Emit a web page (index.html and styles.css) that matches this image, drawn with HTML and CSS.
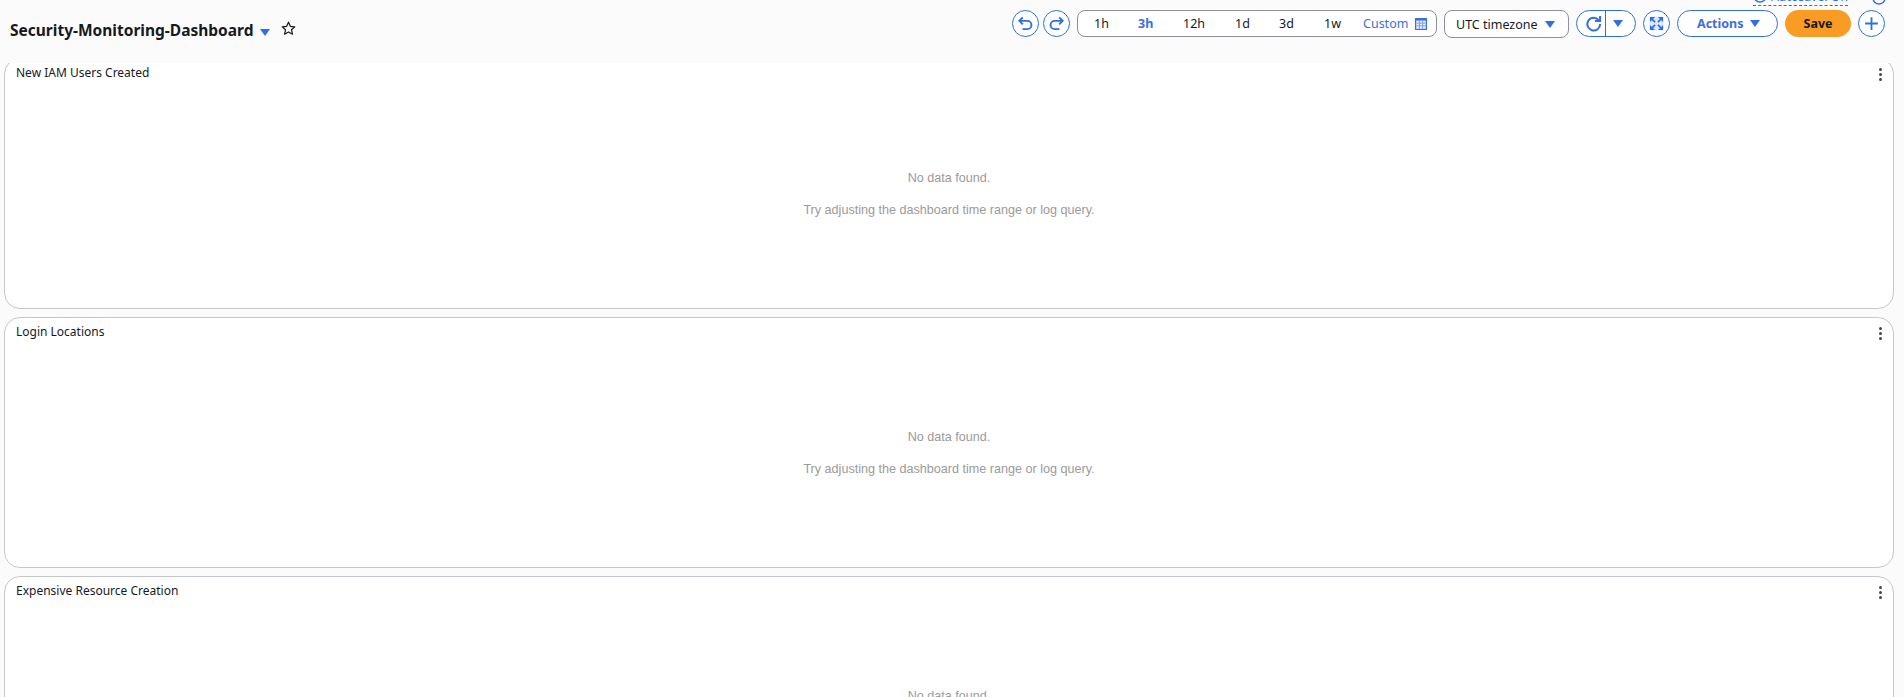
FILE: index.html
```html
<!DOCTYPE html>
<html lang="en">
<head>
  <meta charset="UTF-8" />
  <title>Security-Monitoring-Dashboard</title>
  <link rel="stylesheet" href="styles.css">
</head>
<body>

  <header class="topbar">
    <div class="title-group">
      <h1 class="dash-title">Security-Monitoring-Dashboard</h1>
      <span class="caret caret-title"></span>
      <svg class="star" width="15" height="15" viewBox="0 0 16 16"><path d="M8 1.3l2 4.4 4.7.5-3.5 3.2 1 4.7L8 11.7l-4.2 2.4 1-4.7L1.3 6.2 6 5.7z" fill="none" stroke="#16191f" stroke-width="1.3" stroke-linejoin="round"/></svg>
    </div>

    <div class="autosave-strip">
      <a class="autosave"><svg width="14" height="14" viewBox="0 0 14 14"><circle cx="7" cy="7" r="6" fill="none" stroke="#2f6fe0" stroke-width="1.5"/></svg><span>Autosave: On</span></a>
      <svg class="info" width="14" height="14" viewBox="0 0 14 14"><circle cx="7" cy="7" r="6" fill="none" stroke="#2f6fe0" stroke-width="1.5"/></svg>
    </div>

    <div class="tools">
      <div class="pair">
        <button class="round">
          <svg width="17" height="17" viewBox="0 0 16 16"><path d="M5.5 2.2L2.2 5.5l3.3 3.3M2.5 5.5h7.2a3.9 3.9 0 0 1 0 7.8H5.2" fill="none" stroke="#2f6fe0" stroke-width="1.8"/></svg>
        </button>
        <button class="round">
          <svg width="17" height="17" viewBox="0 0 16 16"><path d="M10.5 2.2l3.3 3.3-3.3 3.3M13.5 5.5H6.3a3.9 3.9 0 0 0 0 7.8h4.5" fill="none" stroke="#2f6fe0" stroke-width="1.8"/></svg>
        </button>
      </div>

      <div class="ranges">
        <span class="range r-1h">1h</span>
        <span class="range r-3h active">3h</span>
        <span class="range r-12h">12h</span>
        <span class="range r-1d">1d</span>
        <span class="range r-3d">3d</span>
        <span class="range r-1w">1w</span>
        <span class="custom">Custom
          <svg width="12" height="12" viewBox="0 0 12 12"><rect width="12" height="12" fill="#3b6fe0"/><path d="M1.2 2.6h9.6v8.2H1.2z" fill="#eaf0fd"/><path d="M1.2 5.2h9.6M1.2 7.8h9.6M4.4 2.6v8.2M7.6 2.6v8.2" stroke="#7fa0ea" stroke-width="1"/></svg>
        </span>
      </div>

      <div class="tz">UTC timezone <span class="caret"></span></div>

      <div class="refresh">
        <span class="refresh-icon">
          <svg width="17" height="17" viewBox="0 0 16 16"><path d="M13 5A6 6 0 1 0 14.2 8.4" fill="none" stroke="#2f6fe0" stroke-width="1.9"/><path d="M9.4 5.6h4.8V1" fill="none" stroke="#2f6fe0" stroke-width="1.9"/></svg>
        </span>
        <span class="refresh-drop"><span class="caret"></span></span>
      </div>

      <button class="round">
        <svg width="15" height="15" viewBox="0 0 16 16"><rect x="0.5" y="0.5" width="15" height="15" fill="#dfe8fb"/><path d="M1 6.5V1h5.5zM15 6.5V1H9.5zM1 9.5V15h5.5zM15 9.5V15H9.5z" fill="#2f6fe0"/><path d="M6.5 6.5L3.5 3.5M9.5 6.5l3-3M6.5 9.5l-3 3M9.5 9.5l3 3" stroke="#2f6fe0" stroke-width="1.8"/></svg>
      </button>

      <button class="actions">Actions <span class="caret"></span></button>
      <button class="save">Save</button>

      <button class="round">
        <svg width="17" height="17" viewBox="0 0 16 16"><path d="M8 2v12M2 8h12" fill="none" stroke="#2f6fe0" stroke-width="1.7"/></svg>
      </button>
    </div>
  </header>

  <main class="widgets">
    <section class="widget">
      <div class="widget-head">
        <h2>New IAM Users Created</h2>
        <span class="dots"><i></i><i></i><i></i></span>
      </div>
      <div class="empty">
        <p>No data found.</p>
        <p>Try adjusting the dashboard time range or log query.</p>
      </div>
    </section>

    <section class="widget">
      <div class="widget-head">
        <h2>Login Locations</h2>
        <span class="dots"><i></i><i></i><i></i></span>
      </div>
      <div class="empty">
        <p>No data found.</p>
        <p>Try adjusting the dashboard time range or log query.</p>
      </div>
    </section>

    <section class="widget">
      <div class="widget-head">
        <h2>Expensive Resource Creation</h2>
        <span class="dots"><i></i><i></i><i></i></span>
      </div>
      <div class="empty">
        <p>No data found.</p>
        <p>Try adjusting the dashboard time range or log query.</p>
      </div>
    </section>
  </main>

</body>
</html>
```

FILE: styles.css
```css
* { box-sizing: border-box; }
html, body {
  height: 100%;
  overflow: hidden;
}
body {
  margin: 0;
  background: #fbfbfb;
  color: #16191f;
  font-family: "Noto Sans", "Open Sans", sans-serif;
}
button {
  font-family: inherit;
  cursor: pointer;
}

/* top bar */
.topbar {
  position: relative;
  z-index: 2;
  height: 63px;
  padding: 10px 19px 0 10px;
  display: flex;
  justify-content: space-between;
  background: #fbfbfb;
}
.title-group {
  display: flex;
  align-items: center;
  height: 39px;
}
.dash-title {
  margin: 0;
  font-size: 15.5px;
  font-weight: 700;
  line-height: 20px;
}
.caret {
  display: inline-block;
  width: 0;
  height: 0;
  border-left: 5px solid transparent;
  border-right: 5px solid transparent;
  border-top: 7px solid #2f6fe0;
}
.caret-title {
  margin: 6px 0 0 7px;
}
.star {
  margin: -3px 0 0 11px;
}
.autosave-strip {
  position: absolute;
  top: -11px;
  right: 18px;
  display: flex;
  align-items: center;
  gap: 24px;
}
.autosave {
  display: flex;
  align-items: center;
  gap: 4px;
  height: 17px;
  padding-bottom: 2px;
  font-size: 12.3px;
  color: #2f6fe0;
  border-bottom: 1px dashed #2f6fe0;
}
.tools {
  display: flex;
  align-items: flex-start;
  gap: 7px;
}
.pair {
  display: flex;
  gap: 4px;
}
.round {
  width: 27px;
  height: 27px;
  padding: 0;
  display: flex;
  align-items: center;
  justify-content: center;
  background: #fff;
  border: 1px solid #2f6fe0;
  border-radius: 50%;
}
.ranges {
  width: 360px;
  height: 27px;
  padding: 0 8px 0 16px;
  display: flex;
  align-items: center;
  font-size: 12.5px;
  background: #fff;
  border: 1px solid #8d9099;
  border-radius: 8px;
}
.range { text-align: center; }
.r-1h { width: 15px; }
.r-3h { width: 15px; margin-left: 29px; }
.r-12h { width: 22px; margin-left: 30px; }
.r-1d { width: 15px; margin-left: 30px; }
.r-3d { width: 15px; margin-left: 29px; }
.r-1w { width: 17px; margin-left: 30px; }
.range.active {
  color: #3b6fe0;
  font-weight: 700;
}
.custom {
  margin-left: 22px;
  display: flex;
  align-items: center;
  gap: 7px;
  color: #3b6fe0;
}
.tz {
  width: 125px;
  height: 28px;
  padding: 0 13px 0 11px;
  display: flex;
  align-items: center;
  justify-content: space-between;
  font-size: 12.5px;
  background: #fff;
  border: 1px solid #8d9099;
  border-radius: 8px;
}
.refresh {
  width: 60px;
  height: 27px;
  display: flex;
  background: #fff;
  border: 1px solid #2f6fe0;
  border-radius: 14px;
}
.refresh-icon {
  width: 29px;
  padding-left: 5px;
  display: flex;
  align-items: center;
  justify-content: center;
  border-right: 1px solid #2f6fe0;
}
.refresh-drop {
  flex: 1;
  padding-right: 6px;
  display: flex;
  align-items: center;
  justify-content: center;
}
.actions {
  width: 101px;
  height: 27px;
  padding: 0 17px 0 19px;
  display: flex;
  align-items: center;
  justify-content: space-between;
  font-size: 12.5px;
  font-weight: 700;
  color: #3b6fe0;
  background: #fff;
  border: 1px solid #2f6fe0;
  border-radius: 14px;
}
.save {
  width: 66px;
  height: 27px;
  padding: 0;
  font-size: 12.5px;
  font-weight: 700;
  color: #16191f;
  background: #f89c24;
  border: none;
  border-radius: 14px;
}

/* widgets */
.widgets {
  margin-top: -5.5px;
  padding: 0 10px 0 4px;
  display: flex;
  flex-direction: column;
  gap: 8px;
}
.widget {
  flex: none;
  height: 251px;
  display: flex;
  flex-direction: column;
  background: #fff;
  border: 1px solid #c6c6cd;
  border-radius: 16px;
}
.widget-head {
  height: 30px;
  padding: 5px 11px 0 11px;
  display: flex;
  justify-content: space-between;
}
.widget-head h2 {
  margin: 0;
  font-size: 12px;
  font-weight: 400;
  line-height: 18px;
}
.dots {
  padding-top: 4px;
  display: flex;
  flex-direction: column;
  gap: 2px;
}
.dots i {
  width: 3px;
  height: 3px;
  border-radius: 50%;
  background: #424650;
}
.empty {
  padding-top: 81px;
  text-align: center;
  font-family: "Liberation Sans", Arial, sans-serif;
  font-size: 12.6px;
  color: #9c9a9a;
}
.empty p {
  margin: 0 0 16.5px;
  line-height: 16px;
}
```
